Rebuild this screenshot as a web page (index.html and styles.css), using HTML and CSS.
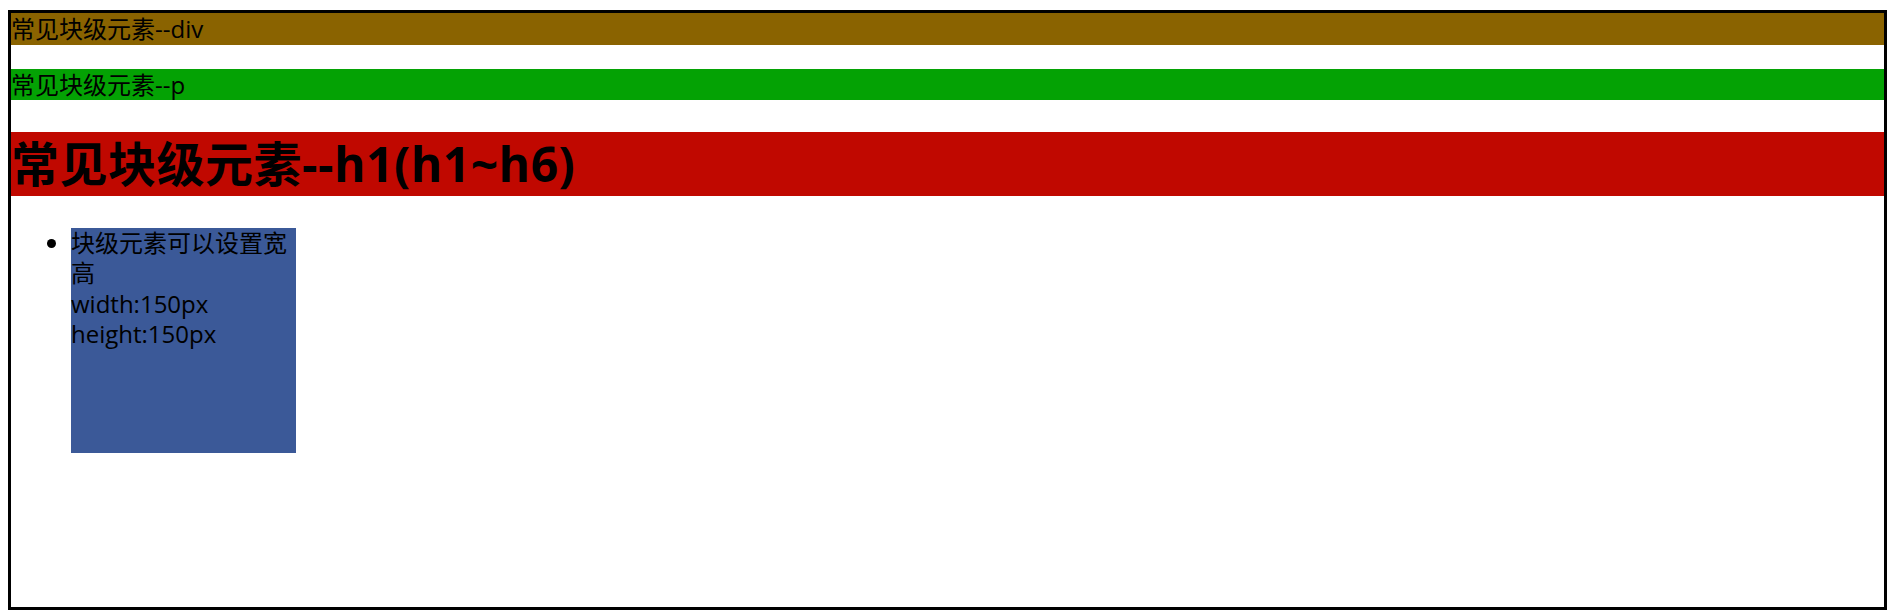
FILE: index.html
```html
<!DOCTYPE html>
<html lang="zh-CN">
<head>
    <meta charset="UTF-8">
    <title>常见块级元素</title>
    <link rel="stylesheet" href="styles.css">
</head>
<body>
    <div class="box">
        <div class="block-div">常见块级元素--div</div>
        <p class="block-p">常见块级元素--p</p>
        <h1 class="block-h1">常见块级元素--h1(h1~h6)</h1>
        <ul>
            <li class="block-li">块级元素可以设置宽高<br>width:150px<br>height:150px</li>
        </ul>
    </div>
</body>
</html>
```

FILE: styles.css
```css
body {
    margin: 10px 0 0 8px;
    font-family: "Open Sans", "Noto Sans CJK SC", sans-serif;
    font-size: 24px;
    line-height: 1.32;
}

.box {
    box-sizing: border-box;
    width: 1879px;
    height: 600px;
    border: 3px solid #000;
}

.block-div {
    background: #8a6300;
}

.block-p {
    margin: 24px 0;
    background: #04a204;
}

.block-h1 {
    margin: 32px 0;
    font-size: 48px;
    letter-spacing: 0.5px;
    background: #c00800;
}

ul {
    margin: 24px 0;
    padding-left: 60px;
}

.block-li {
    width: 225px;
    height: 225px;
    line-height: 30.5px;
    background: #3b5998;
}
```
